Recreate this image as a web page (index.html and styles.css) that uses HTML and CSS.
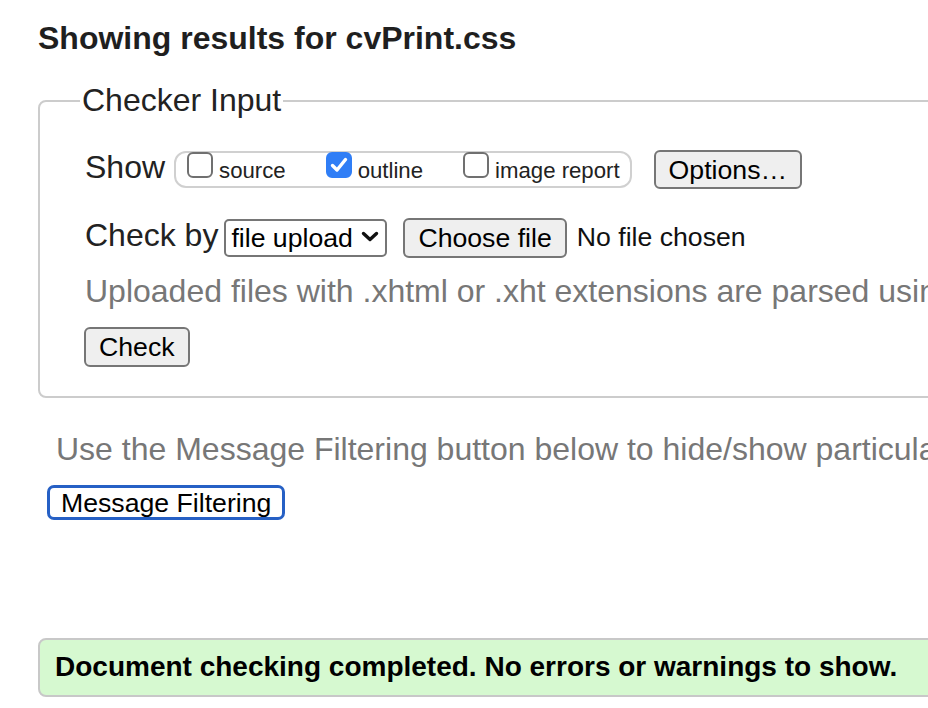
FILE: index.html
```html
<!DOCTYPE html>
<html lang="en">
<head>
<meta charset="utf-8">
<title>Showing results for cvPrint.css</title>
<link rel="stylesheet" href="styles.css">
</head>
<body>
<main class="page">
  <h2 class="title">Showing results for cvPrint.css</h2>
  <fieldset class="checker">
    <legend class="legend">Checker Input</legend>
    <div class="row">
      <span class="lbl">Show</span>
      <span class="group">
        <label class="opt"><span class="cb"></span>source</label>
        <label class="opt"><span class="cb on"><svg width="26" height="26" viewBox="0 0 26 26"><path d="M6.5 13.5 L11 18 L19.5 7.5" fill="none" stroke="#fff" stroke-width="3.4" stroke-linecap="round" stroke-linejoin="round"/></svg></span>outline</label>
        <label class="opt"><span class="cb"></span>image report</label>
      </span>
      <button class="btn btn-options" type="button">Options…</button>
    </div>
    <div class="row row-by">
      <span class="lbl">Check by</span>
      <span class="sel">
        <select class="sel-input"><option>file upload</option></select>
        <svg class="chev" width="18" height="11" viewBox="0 0 18 11"><path d="M2.5 2.5 L9 8.5 L15.5 2.5" fill="none" stroke="#111" stroke-width="3.4" stroke-linecap="round" stroke-linejoin="round"/></svg>
      </span>
      <button class="btn btn-file" type="button">Choose file</button>
      <span class="nofile">No file chosen</span>
    </div>
    <p class="hint">Uploaded files with .xhtml or .xht extensions are parsed using the XML parser.</p>
    <div class="submit"><button class="btn" type="button">Check</button></div>
  </fieldset>
  <p class="note">Use the Message Filtering button below to hide/show particular messages, and to see total counts of errors and warnings.</p>
  <div class="filter-wrap"><button class="btn-filter" type="button">Message Filtering</button></div>
  <div class="success">Document checking completed. No errors or warnings to show.</div>
</main>
</body>
</html>
```

FILE: styles.css
```css
html, body {
  margin: 0;
  padding: 0;
  background: #fff;
  overflow: hidden;
}
body {
  font-family: "Liberation Sans", Arial, Helvetica, sans-serif;
  color: #222;
}
.page {
  width: 1400px;
  padding: 20px 0 0 38px;
  box-sizing: border-box;
}
.title {
  margin: 0 0 25px;
  font-size: 32px;
  font-weight: bold;
  line-height: normal;
  color: #1f1f1f;
}
.checker {
  margin: 0;
  padding: 31px 0 29px 45px;
  border: 2px solid #cccccc;
  border-radius: 8px;
  min-width: 0;
}
.legend {
  font-size: 32px;
  padding: 0 2px;
  margin-left: -5px;
  color: #222;
}
.row {
  display: flex;
  align-items: center;
  height: 39px;
  white-space: nowrap;
}
.row-by {
  margin-top: 29px;
}
.lbl {
  font-size: 32px;
  margin-bottom: 5px;
  color: #222;
}
.group {
  display: inline-flex;
  align-items: flex-start;
  box-sizing: border-box;
  height: 37px;
  margin-left: 9px;
  padding: 0 10px 0 11px;
  border: 2px solid #d0d0d0;
  border-radius: 12px;
  font-size: 22.2px;
  color: #222;
}
.opt {
  display: inline-flex;
  align-items: baseline;
  margin-top: -1px;
  margin-right: 40px;
}
.opt:last-child {
  margin-right: 0;
}
.cb {
  display: inline-block;
  box-sizing: border-box;
  width: 26px;
  height: 26px;
  margin-right: 6px;
  border: 2px solid #707070;
  border-radius: 6px;
  background: #fff;
}
.cb svg {
  display: block;
  margin: -2px;
}
.cb.on {
  background: #307ef6;
  border-color: #307ef6;
}
.btn {
  box-sizing: border-box;
  height: 39px;
  padding: 1px 13px 0;
  font-family: "Liberation Sans", Arial, Helvetica, sans-serif;
  font-size: 26.67px;
  color: #000;
  background: #efefef;
  border: 2px solid #767676;
  border-radius: 6px;
}
.btn-options {
  margin-left: 22px;
}
.sel {
  position: relative;
  display: inline-block;
  margin-left: 6px;
  height: 38px;
}
.sel-input {
  -webkit-appearance: none;
  appearance: none;
  box-sizing: border-box;
  width: 163px;
  height: 38px;
  padding: 0 0 0 5px;
  font-family: "Liberation Sans", Arial, Helvetica, sans-serif;
  font-size: 26.67px;
  color: #000;
  background: #fff;
  border: 2px solid #767676;
  border-radius: 5px;
}
.chev {
  position: absolute;
  right: 8px;
  top: 12px;
}
.btn-file {
  margin-left: 16px;
  height: 40px;
}
.nofile {
  margin-left: 10px;
  font-size: 26.67px;
  color: #111;
}
.hint {
  margin: 16px 0 0;
  font-size: 32px;
  color: #777;
  white-space: nowrap;
}
.submit {
  display: flex;
  margin-top: 17px;
  margin-left: -1px;
}
.submit .btn {
  height: 40px;
}
.note {
  margin: 33px 0 0 18px;
  font-size: 32px;
  color: #777;
  white-space: nowrap;
}
.filter-wrap {
  display: flex;
  margin: 17px 0 0 9px;
}
.btn-filter {
  box-sizing: border-box;
  height: 35px;
  padding: 0 11px 2px;
  font-family: "Liberation Sans", Arial, Helvetica, sans-serif;
  font-size: 26.67px;
  color: #000;
  background: #fff;
  border: 3px solid #2660c5;
  border-radius: 7px;
}
.success {
  margin-top: 118px;
  box-sizing: border-box;
  height: 59px;
  padding: 0 0 2px 15px;
  border: 2px solid #c8c8c8;
  border-radius: 8px;
  background: #d6f9d0;
  font-size: 28px;
  font-weight: bold;
  line-height: 53px;
  color: #000;
  white-space: nowrap;
}
```
